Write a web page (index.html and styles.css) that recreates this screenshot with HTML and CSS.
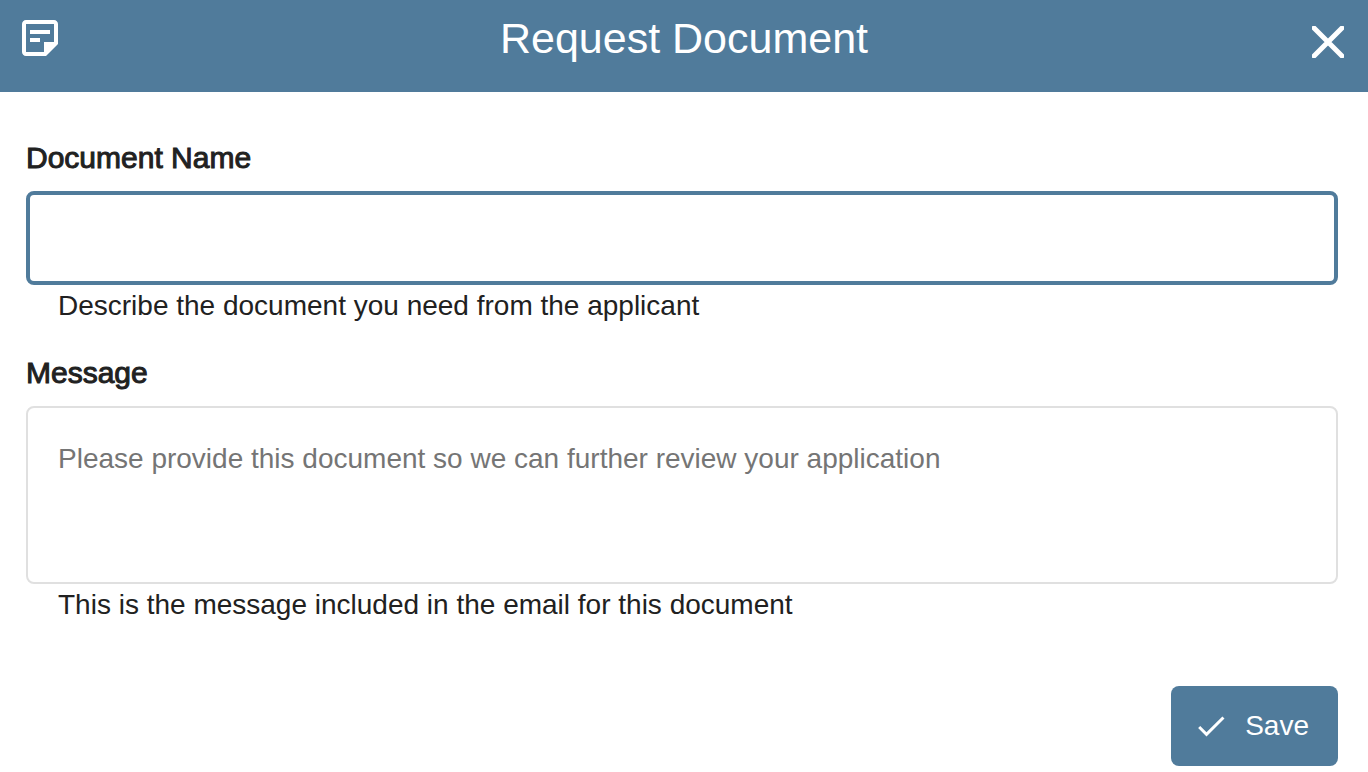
FILE: index.html
```html
<!DOCTYPE html>
<html lang="en">
<head>
    <meta charset="UTF-8">
    <meta name="viewport" content="width=device-width, initial-scale=1.0">
    <title>Request Document</title>
    <link rel="stylesheet" href="styles.css">
</head>
<body>
    <header class="dialog-header">
        <svg class="header-icon" viewBox="0 0 24 24" aria-hidden="true">
            <path d="M19 3H5c-1.100 0-2 .9-2 2v14c0 1.100.9 2 2 2h10l6-6V5c0-1.100-.9-2-2-2zM5 19V5h14v9h-5v5H5z" />
            <path d="M7 8h10v2H7zM7 12h5v2H7z" />
        </svg>
        <h1 class="dialog-title">Request Document</h1>
        <button type="button" class="close-button" aria-label="Close">
            <svg class="close-icon" viewBox="0 0 32 32" aria-hidden="true">
                <path d="M2 2L30 30M30 2L2 30" />
            </svg>
        </button>
    </header>

    <form class="dialog-form">
        <div class="form-group">
            <label class="form-label" for="documentName">Document Name</label>
            <input type="text" class="form-control form-control-active" id="documentName" aria-describedby="documentNameHelp">
            <p class="form-help" id="documentNameHelp">Describe the document you need from the applicant</p>
        </div>

        <div class="form-group">
            <label class="form-label" for="message">Message</label>
            <textarea class="form-control form-message" id="message" placeholder="Please provide this document so we can further review your application" aria-describedby="messageHelp"></textarea>
            <p class="form-help" id="messageHelp">This is the message included in the email for this document</p>
        </div>

        <div class="form-actions">
            <button type="submit" class="save-button">
                <svg class="save-icon" viewBox="0 0 24 24" aria-hidden="true">
                    <path d="M9 16.170L4.830 12l-1.420 1.410L9 19 21 7l-1.410-1.410z" />
                </svg>
                Save
            </button>
        </div>
    </form>
</body>
</html>
```

FILE: styles.css
```css
* {
    box-sizing: border-box;
}
body {
    margin: 0;
    background: #fff;
    color: #212121;
    font-family: "Liberation Sans", Arial, sans-serif;
    font-size: 28px;
    line-height: 32px;
}
.dialog-header {
    display: grid;
    grid-template-columns: 48px 1fr 48px;
    align-items: start;
    padding: 14px 16px 30px;
    background: #507b9b;
    color: #fff;
}
.header-icon {
    width: 48px;
    height: 48px;
    fill: currentColor;
}
.dialog-title {
    margin: 0;
    font-size: 43px;
    font-weight: normal;
    line-height: 48px;
    text-align: center;
}
.close-button {
    padding: 12px 8px 0;
    border: none;
    background: none;
    color: inherit;
    cursor: pointer;
}
.close-icon {
    display: block;
    width: 32px;
    height: 32px;
    fill: none;
    stroke: currentColor;
    stroke-width: 5;
    stroke-linecap: round;
}
.dialog-form {
    padding: 48px 30px 6px 26px;
}
.form-group {
    margin-bottom: 33px;
}
.form-label {
    display: block;
    margin-bottom: 15px;
    font-size: 30px;
    line-height: 36px;
    -webkit-text-stroke: 1px currentColor;
}
.form-control {
    display: block;
    width: 100%;
    height: 94px;
    padding: 28px 30px;
    border: 2px solid #e0e0e0;
    border-radius: 8px;
    outline: none;
    background: #fff;
    color: inherit;
    font: inherit;
}
.form-control::placeholder {
    color: #757575;
    opacity: 1;
}
.form-control:focus,
.form-control-active {
    border: 4px solid #507b9b;
}
.form-message {
    height: 178px;
    padding: 35px 30px;
    resize: none;
}
.form-help {
    margin: 5px 0 0;
    padding: 0 32px;
}
.form-actions {
    display: flex;
    justify-content: flex-end;
    padding-top: 32px;
}
.save-button {
    display: flex;
    align-items: center;
    gap: 16px;
    height: 80px;
    padding: 0 29px 0 22px;
    border: none;
    border-radius: 8px;
    background: #507b9b;
    color: #fff;
    font: inherit;
    cursor: pointer;
}
.save-icon {
    width: 36px;
    height: 36px;
    fill: currentColor;
}
```
